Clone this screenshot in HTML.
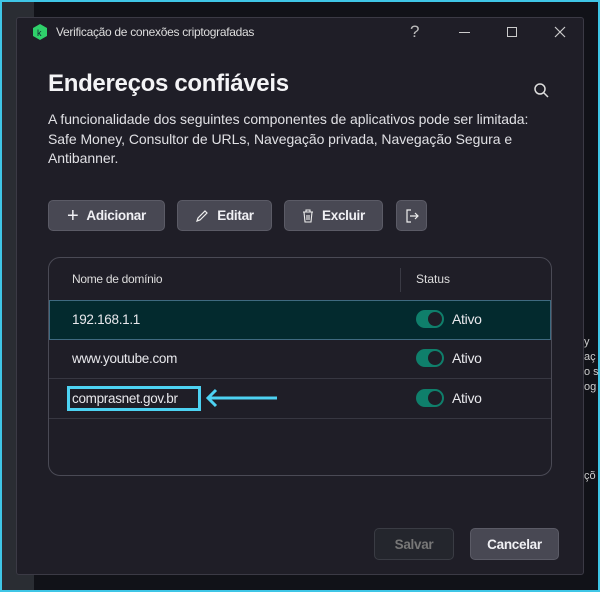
<!DOCTYPE html>
<html><head><meta charset="utf-8"><style>
*{box-sizing:border-box;margin:0;padding:0}
body{width:600px;height:592px;overflow:hidden;background:#111218;font-family:"Liberation Sans",sans-serif;position:relative;color:#e8e8ec}
.frame{position:absolute;inset:0;border:2px solid #3fc6e6;}
.strip{position:absolute;left:2px;top:2px;width:32px;height:588px;background:#2a2d33}
.dlg{position:absolute;left:16px;top:17px;width:568px;height:558px;background:#1f1e27;border:1px solid #3b3a45;border-radius:3px}
.abs{position:absolute}
.btn{position:absolute;height:31px;background:#484853;border:1px solid #5b5b66;border-radius:5px;font-weight:bold;font-size:13.5px;letter-spacing:-0.3px;color:#f0f0f4;display:flex;align-items:center;justify-content:center;gap:8px}
.tbl{position:absolute;left:48px;top:257px;width:504px;height:219px;border:1px solid #4a4a55;border-radius:12px;overflow:hidden}
.row{position:absolute;left:0;width:100%;height:40px;border-bottom:1px solid #373741;font-size:13.5px;letter-spacing:-0.3px}
.row .d{position:absolute;left:23px;top:12px}
.tg{position:absolute;left:367px;top:10px;width:28px;height:18px;border-radius:9px;background:#0f7f6b}
.tg::after{content:"";position:absolute;right:2px;top:2px;width:14px;height:14px;border-radius:50%;background:#1e1d26}
.at{position:absolute;left:403px;top:11px;font-size:14px}
</style></head><body>
<div class="strip"></div>
<div class="frame"></div>
<div class="abs" style="left:584px;top:335px;font-size:11px;color:#ccc;line-height:15px">y<br>aç<br>o s<br>og</div>
<div class="abs" style="left:584px;top:470px;font-size:11px;color:#ccc">çõ</div>
<div class="dlg"></div>
<svg class="abs" style="left:33px;top:24px" width="14" height="16" viewBox="0 0 14 16"><path d="M7 0L14 4V12L7 16L0 12V4Z" fill="#2fd06a"/><text x="4" y="12" font-size="9" font-family="Liberation Sans" fill="#123">k</text></svg>
<div class="abs" style="left:56px;top:25px;font-size:12px;letter-spacing:-0.3px;color:#ddd">Verificação de conexões criptografadas</div>
<div class="abs" style="left:410px;top:22px;font-size:17px;color:#bbb">?</div>
<div class="abs" style="left:459px;top:32px;width:11px;height:1px;background:#ccc"></div>
<div class="abs" style="left:507px;top:27px;width:10px;height:10px;border:1px solid #ccc"></div>
<svg class="abs" style="left:554px;top:26px" width="12" height="12"><path d="M1 1L11 11M11 1L1 11" stroke="#ccc" stroke-width="1.2"/></svg>
<div class="abs" style="left:48px;top:70px;font-size:24px;font-weight:bold;letter-spacing:-0.3px;color:#f4f4f6">Endereços confiáveis</div>
<svg class="abs" style="left:533px;top:82px" width="17" height="17"><circle cx="7" cy="7" r="5" stroke="#ddd" stroke-width="1.5" fill="none"/><path d="M11 11L15 15" stroke="#ddd" stroke-width="1.5"/></svg>
<div class="abs" style="left:48px;top:110px;font-size:14px;letter-spacing:-0.05px;line-height:19.5px;color:#e0e0e4;width:540px">A funcionalidade dos seguintes componentes de aplicativos pode ser limitada:<br>Safe Money, Consultor de URLs, Navegação privada, Navegação Segura e<br>Antibanner.</div>
<div class="btn" style="left:48px;top:200px;width:117px"><span style="font-weight:normal;font-size:20px;line-height:1">+</span>Adicionar</div>
<div class="btn" style="left:177px;top:200px;width:95px"><svg width="14" height="14"><path d="M2 12L3 9L10 2L12 4L5 11Z" stroke="#eee" fill="none" stroke-width="1.2"/></svg>Editar</div>
<div class="btn" style="left:284px;top:200px;width:99px"><svg width="12" height="14"><path d="M1 3H11M4 3V1H8V3M2 3L3 13H9L10 3M5 6V11M7 6V11" stroke="#eee" fill="none" stroke-width="1.1"/></svg>Excluir</div>
<div class="btn" style="left:396px;top:200px;width:31px"><svg width="14" height="14"><path d="M6 1H2V13H6M5 7H13M10 4L13 7L10 10" stroke="#eee" fill="none" stroke-width="1.2"/></svg></div>
<div class="tbl">
<div class="abs" style="left:23px;top:14px;font-size:12px;letter-spacing:-0.3px;color:#ddd">Nome de domínio</div>
<div class="abs" style="left:351px;top:10px;width:1px;height:24px;background:#3a3a44"></div>
<div class="abs" style="left:367px;top:14px;font-size:12px;color:#ddd">Status</div>
<div class="row" style="top:42px;height:40px;background:#032a2e;border:1px solid #3f6a80"><span class="d" style="left:22px;top:11px">192.168.1.1</span><div class="tg" style="left:366px;top:9px"></div><span class="at" style="left:402px;top:10px">Ativo</span></div>
<div class="row" style="top:81px"><span class="d">www.youtube.com</span><div class="tg"></div><span class="at">Ativo</span></div>
<div class="row" style="top:121px"><span class="d">comprasnet.gov.br</span><div class="tg"></div><span class="at">Ativo</span></div>
</div>
<div class="abs" style="left:67px;top:386px;width:134px;height:25px;border:3px solid #4dd2f2"></div>
<svg class="abs" style="left:203px;top:388px" width="76" height="20"><path d="M74 10H6M13 2L5 10L13 18" stroke="#4dd2f2" stroke-width="3" fill="none"/></svg>
<div class="btn" style="left:374px;top:528px;width:80px;height:32px;background:#24262d;border-color:#3a3c44;color:#777"><span>Salvar</span></div>
<div class="btn" style="left:470px;top:528px;width:89px;height:32px">Cancelar</div>
</body></html>
